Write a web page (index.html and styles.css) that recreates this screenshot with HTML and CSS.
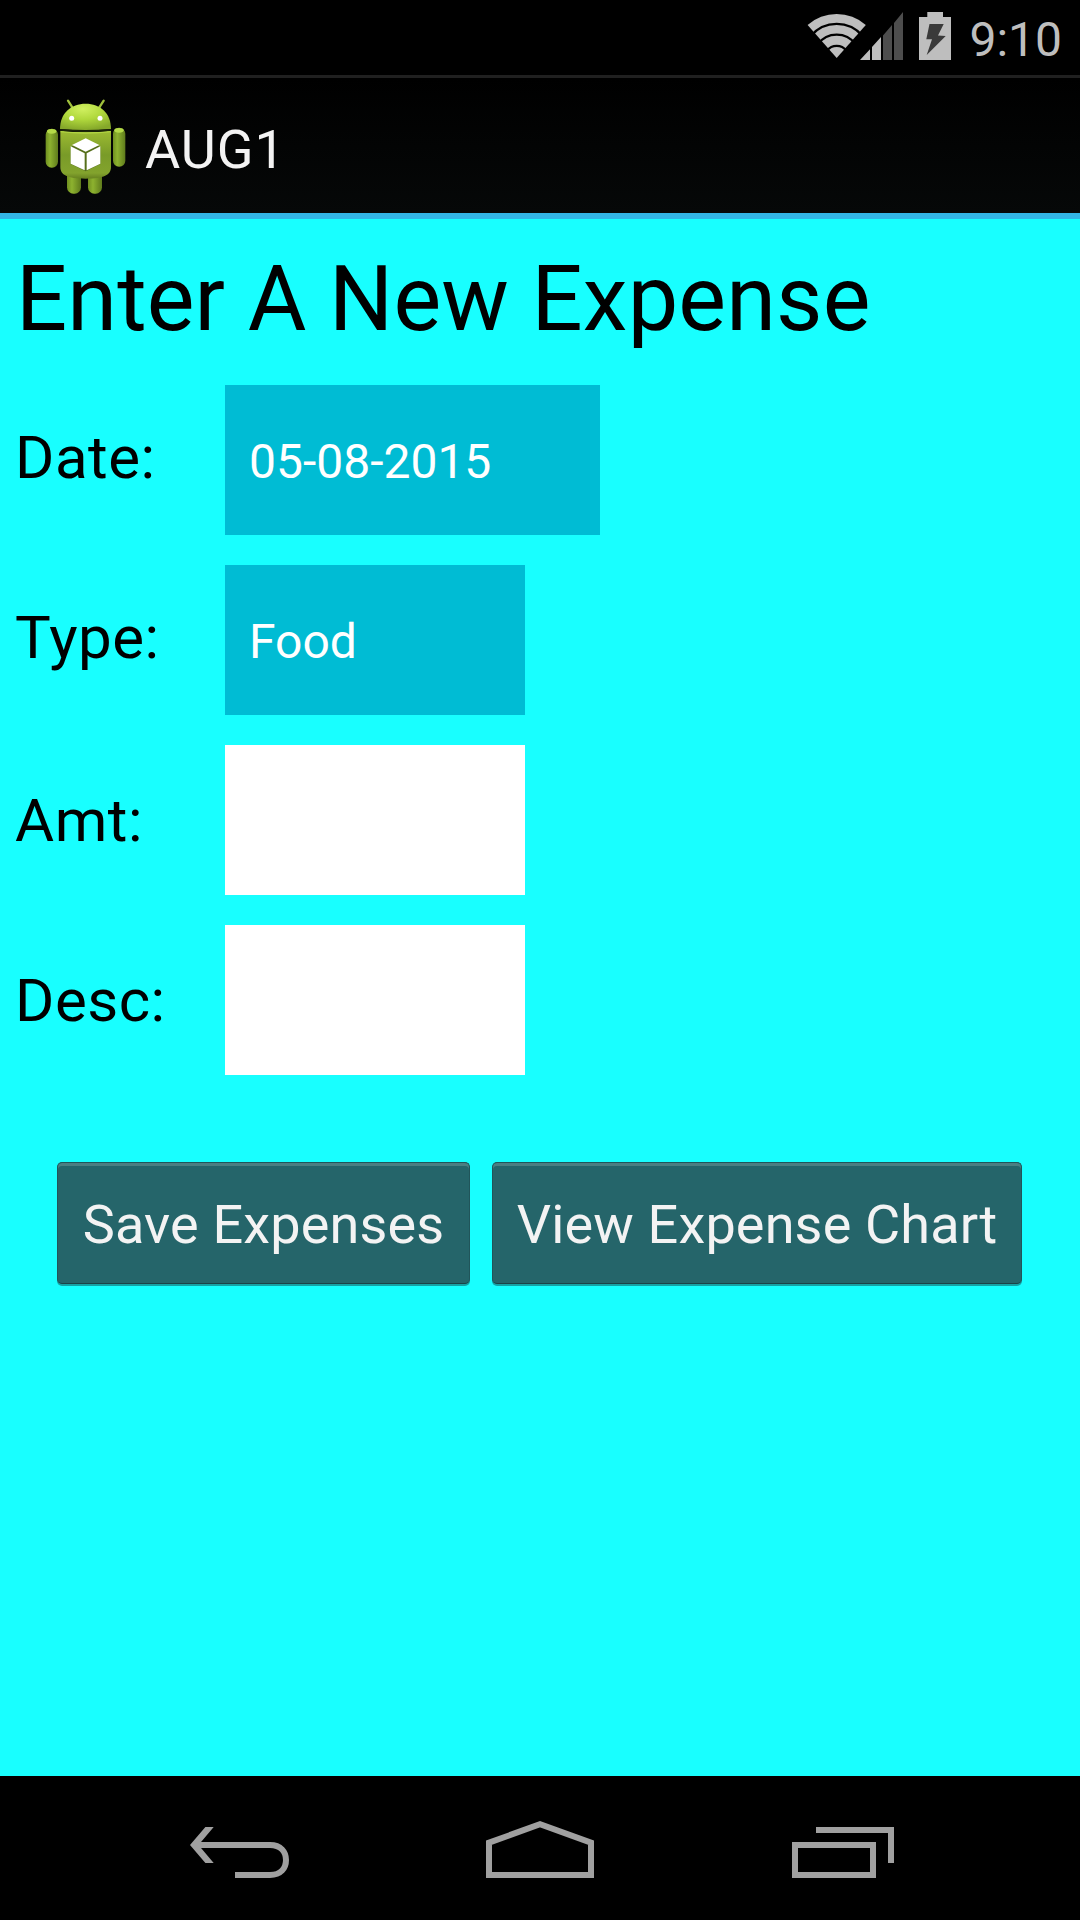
FILE: index.html
```html
<!DOCTYPE html>
<html lang="en">
<head>
    <meta charset="UTF-8">
    <meta name="viewport" content="width=device-width, initial-scale=1.0">
    <title>AUG1</title>
    <link rel="stylesheet" href="styles.css">
</head>
<body>
    <div class="status-bar">
        <svg class="status-icons" viewBox="807 0 145 75">
            <!-- wifi -->
            <path class="icon-on" d="M836.7 58 L807.6 25 A44 44 0 0 1 865.8 25 Z"/>
            <g class="wifi-gap">
                <path d="M811 35.7 A33.8 33.8 0 0 1 862.4 35.7"/>
                <path d="M818 44 A23.2 23.2 0 0 1 855.4 44"/>
                <path d="M827 50.6 A12.2 12.2 0 0 1 846.4 50.6"/>
            </g>
            <!-- signal -->
            <path class="icon-on" d="M860 60 L870 49.3 V60 Z M872 60 V47 L881 37 V60 Z"/>
            <path class="icon-off" d="M883 60 V35.5 L892 25 V60 Z M894 60 V23 L903 12 V60 Z"/>
            <!-- battery -->
            <path class="icon-on" d="M919 17 H927.3 V12 H943 V17 H951 V60 H919 Z"/>
            <path class="bolt" d="M929.5 24 H943.7 L938 35.5 L945.7 36 L926.7 55 L932 39.3 H926.3 Z"/>
        </svg>
        <span class="clock">9:10</span>
    </div>

    <div class="action-bar">
        <svg class="app-icon" viewBox="75 58 246 288">
            <defs>
                <linearGradient id="limb" x1="0" x2="1" y1="0" y2="0">
                    <stop offset="0" stop-color="#6f8f20"/>
                    <stop offset="0.35" stop-color="#8db22f"/>
                    <stop offset="1" stop-color="#5f7b1c"/>
                </linearGradient>
                <linearGradient id="torso" x1="0" x2="0" y1="0" y2="1">
                    <stop offset="0" stop-color="#9dbb32"/>
                    <stop offset="0.5" stop-color="#799b28"/>
                    <stop offset="0.88" stop-color="#83a32d"/>
                    <stop offset="1" stop-color="#66811f"/>
                </linearGradient>
                <radialGradient id="head" cx="0.45" cy="0.2" r="0.8">
                    <stop offset="0" stop-color="#d0f060"/>
                    <stop offset="0.5" stop-color="#b0d83c"/>
                    <stop offset="1" stop-color="#85a82a"/>
                </radialGradient>
            </defs>
            <path class="antenna" d="M144 63 L157 83 M251 63 L238 83"/>
            <rect x="141" y="270" width="42" height="72" rx="19" fill="url(#limb)"/>
            <rect x="204" y="270" width="42" height="72" rx="19" fill="url(#limb)"/>
            <rect x="77" y="147" width="37" height="117" rx="18" fill="url(#limb)"/>
            <rect x="279" y="144" width="37" height="117" rx="18" fill="url(#limb)"/>
            <ellipse cx="95" cy="155" rx="14" ry="7" fill="#b4da48"/>
            <ellipse cx="297" cy="152" rx="14" ry="7" fill="#b4da48"/>
            <path d="M121 154 Q197 162 273 154 V262 C273 286 252 297 197 297 C142 297 121 286 121 262 Z" fill="url(#torso)"/>
            <path class="torso-rim" d="M122 156 Q197 164 272 156"/>
            <path d="M120 148 C120 100 153 72 197 72 C241 72 273 100 273 148 Q197 154 120 148 Z" fill="url(#head)"/>
            <path class="neck" d="M120 151 Q197 158 273 151"/>
            <circle cx="155" cy="116" r="7.5" fill="#fff"/>
            <circle cx="240" cy="116" r="7.5" fill="#fff"/>
            <path class="cube-shadow" d="M152 201 L197 180 L241 201 V253 L197 275 L152 253 Z"/>
            <path fill="#fff" d="M197 176 L238 196 L197 216 L156 196 Z M152 200 L194 221 V272 L152 252 Z M241 200 V252 L200 272 V221 Z"/>
        </svg>
        <span class="app-title">AUG1</span>
    </div>

    <main class="content">
        <h1>Enter A New Expense</h1>

        <form class="expense-form">
            <div class="form-row">
                <label for="date">Date:</label>
                <input type="text" id="date" class="field picker picker-date" value="05-08-2015">
            </div>
            <div class="form-row">
                <label for="type">Type:</label>
                <input type="text" id="type" class="field picker" value="Food">
            </div>
            <div class="form-row form-row-entry">
                <label for="amt">Amt:</label>
                <input type="text" id="amt" class="field">
            </div>
            <div class="form-row form-row-entry">
                <label for="desc">Desc:</label>
                <input type="text" id="desc" class="field">
            </div>

            <div class="buttons">
                <button type="button" class="btn btn-save">Save Expenses</button>
                <button type="button" class="btn btn-chart">View Expense Chart</button>
            </div>
        </form>
    </main>

    <div class="nav-bar">
        <svg class="nav-icon" viewBox="0 0 108 144">
            <path class="nav-fill" d="M4 69 L19.4 51 H27.7 L12.5 69 L27.7 87 H19.4 Z"/>
            <path class="nav-line" d="M11 69 H84 C95 69 100 76 100 84 C100 92 95 99 84 99 H49"/>
        </svg>
        <svg class="nav-icon" viewBox="0 0 108 144">
            <path class="nav-line" d="M3 99 V66.6 L54 48.3 L105 66.6 V99 Z"/>
        </svg>
        <svg class="nav-icon" viewBox="0 0 108 144">
            <path class="nav-line" d="M9 69 H87 V99 H9 Z M30 54 H105 V87"/>
        </svg>
    </div>
</body>
</html>
```

FILE: styles.css
```css
:root {
    --background-color: #18ffff;
    --picker-color: #00bcd4;
    --button-color: #25656a;
    --accent-color: #33b5e5;
    --font-family: Roboto, "Noto Sans", sans-serif;
}

* {
    margin: 0;
    padding: 0;
    box-sizing: border-box;
}

body {
    font-family: var(--font-family);
    background: var(--background-color);
    color: #000;
    height: 100vh;
    overflow: hidden;
    display: flex;
    flex-direction: column;
}

.status-bar {
    height: 75px;
    flex: none;
    background: #000;
    display: flex;
    justify-content: flex-end;
    padding-right: 18px;
}

.status-icons {
    width: 145px;
    height: 75px;
    margin-right: 17px;
}

.icon-on {
    fill: #bebebe;
}

.icon-off {
    fill: #4d4d4d;
}

.bolt {
    fill: #3a3a3a;
}

.wifi-gap {
    fill: none;
    stroke: #000;
    stroke-width: 2.2;
}

.clock {
    font-size: 48px;
    line-height: 79px;
    color: #bebebe;
}

.action-bar {
    height: 144px;
    flex: none;
    display: flex;
    align-items: flex-start;
    background: linear-gradient(#000, #060808);
    border-top: 3px solid #202020;
    border-bottom: 6px solid var(--accent-color);
    padding: 21px 0 0 45px;
}

.app-icon {
    width: 82px;
    height: 96px;
}

.antenna {
    stroke: #9fc03c;
    stroke-width: 7;
    stroke-linecap: round;
}

.torso-rim {
    fill: none;
    stroke: #b2d543;
    stroke-width: 4;
}

.neck {
    fill: none;
    stroke: #1c260a;
    stroke-width: 5;
}

.cube-shadow {
    fill: #566f1b;
}

.app-title {
    margin-left: 18px;
    font-size: 54px;
    line-height: 102px;
    letter-spacing: 1px;
    color: #f3f3f3;
}

.content {
    flex: 1;
    padding: 0 15px;
}

h1 {
    font-size: 90px;
    font-weight: 400;
    line-height: 162px;
    letter-spacing: 0.15px;
    margin-bottom: 4px;
    padding-left: 1px;
}

.expense-form {
    display: flex;
    flex-direction: column;
    gap: 30px;
}

.form-row {
    height: 150px;
    display: flex;
    align-items: baseline;
}

.form-row-entry {
    align-items: center;
}

.form-row label {
    width: 210px;
    font-size: 60px;
    line-height: 70px;
    letter-spacing: 0.5px;
}

.form-row-entry label {
    padding-top: 1px;
}

.field {
    width: 300px;
    height: 150px;
    padding: 3px 24px 0;
    border: none;
    outline: none;
    background: #fff;
    font-family: var(--font-family);
    font-size: 48px;
}

.picker {
    background: var(--picker-color);
    color: #fff;
}

.picker-date {
    width: 375px;
}

.buttons {
    display: flex;
    gap: 22px;
    margin-top: 57px;
    padding-left: 42px;
}

.btn {
    height: 122px;
    border: 1px solid #21555a;
    border-bottom-color: #1b4448;
    border-radius: 5px;
    background: var(--button-color);
    box-shadow: inset 0 3px #4a7f82, 0 2px #16a2a5;
    color: #f3f3f3;
    font-family: var(--font-family);
    font-size: 54px;
    line-height: 120px;
    letter-spacing: 0.15px;
    white-space: nowrap;
    padding-top: 2px;
}

.btn-save {
    width: 413px;
}

.btn-chart {
    width: 530px;
}

.nav-bar {
    height: 144px;
    flex: none;
    background: #000;
    display: flex;
    gap: 192px;
    padding-left: 186px;
}

.nav-icon {
    width: 108px;
    height: 144px;
}

.nav-line {
    fill: none;
    stroke: #a0a0a0;
    stroke-width: 6;
}

.nav-fill {
    fill: #a0a0a0;
}
```
